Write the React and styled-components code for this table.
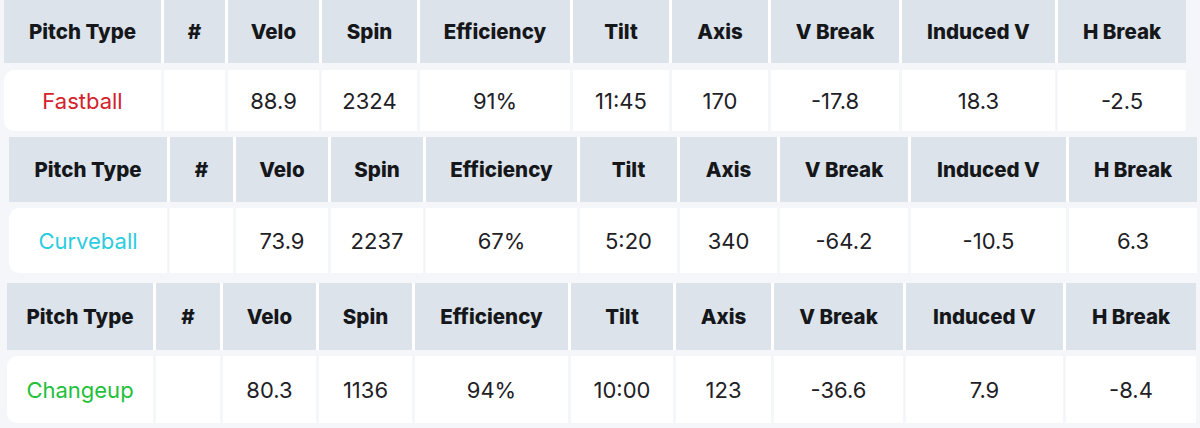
import React from 'react';
import styled, { createGlobalStyle } from 'styled-components';

const GlobalStyle = createGlobalStyle`
  html, body {
    margin: 0;
    padding: 0;
    background: #f4f6fa;
  }
  body {
    font-family: Inter, "Open Sans", "Liberation Sans", sans-serif;
    -webkit-font-smoothing: antialiased;
  }
`;

const Page = styled.div`
  width: 1200px;
  height: 428px;
  overflow: hidden;
  display: flex;
  flex-direction: column;
`;

const Table = styled.div`
  display: flex;
  flex-direction: column;
  gap: ${({ $rowGap }) => $rowGap}px;
  margin-left: ${({ $left }) => $left}px;
  margin-top: ${({ $top }) => $top}px;
`;

const Row = styled.div`
  display: grid;
  grid-template-columns: ${({ $cols }) => $cols};
  column-gap: 3px;
  height: ${({ $h }) => $h}px;
  background: ${({ $head }) => ($head ? '#ffffff' : 'transparent')};
  width: max-content;
`;

const HeadCell = styled.div`
  display: flex;
  align-items: center;
  justify-content: center;
  background: #dde3ea;
  color: #15171b;
  font-size: 20.5px;
  font-weight: 800;
  white-space: nowrap;
`;

const Cell = styled.div`
  display: flex;
  align-items: center;
  justify-content: center;
  background: #ffffff;
  color: ${({ $color }) => $color || '#1e2125'};
  font-size: 22px;
  font-weight: 400;
  white-space: nowrap;
  border-radius: ${({ $first }) => ($first ? '10px 0 0 10px' : '0')};
`;

const headers = ['Pitch Type', '#', 'Velo', 'Spin', 'Efficiency', 'Tilt', 'Axis', 'V Break', 'Induced V', 'H Break'];

const pitches = [
  {
    name: 'Fastball',
    color: '#d4222b',
    values: ['', '88.9', '2324', '91%', '11:45', '170', '-17.8', '18.3', '-2.5'],
    widths: [157, 61, 91, 95, 150, 96, 96, 128, 153, 128],
    left: 4,
    top: 0,
    head: 63,
    data: 61,
    gap: 7,
  },
  {
    name: 'Curveball',
    color: '#2ccbe0',
    values: ['', '73.9', '2237', '67%', '5:20', '340', '-64.2', '-10.5', '6.3'],
    widths: [158, 63, 92, 92, 151, 97, 97, 128, 155, 128],
    left: 9,
    top: 6,
    head: 65,
    data: 65,
    gap: 6,
  },
  {
    name: 'Changeup',
    color: '#22bf3a',
    values: ['', '80.3', '1136', '94%', '10:00', '123', '-36.6', '7.9', '-8.4'],
    widths: [146, 64, 93, 93, 153, 102, 95, 129, 157, 130],
    left: 7,
    top: 10,
    head: 67,
    data: 67,
    gap: 6,
  },
];

function PitchTable({ pitch }) {
  const cols = pitch.widths.map((w) => `${w}px`).join(' ');
  return (
    <Table $left={pitch.left} $top={pitch.top} $rowGap={pitch.gap}>
      <Row $cols={cols} $h={pitch.head} $head>
        {headers.map((h) => (
          <HeadCell key={h}>{h}</HeadCell>
        ))}
      </Row>
      <Row $cols={cols} $h={pitch.data}>
        <Cell $first $color={pitch.color}>{pitch.name}</Cell>
        {pitch.values.map((v, i) => (
          <Cell key={i}>{v}</Cell>
        ))}
      </Row>
    </Table>
  );
}

export default function App() {
  return (
    <>
      <GlobalStyle />
      <Page>
        {pitches.map((p) => (
          <PitchTable key={p.name} pitch={p} />
        ))}
      </Page>
    </>
  );
}
